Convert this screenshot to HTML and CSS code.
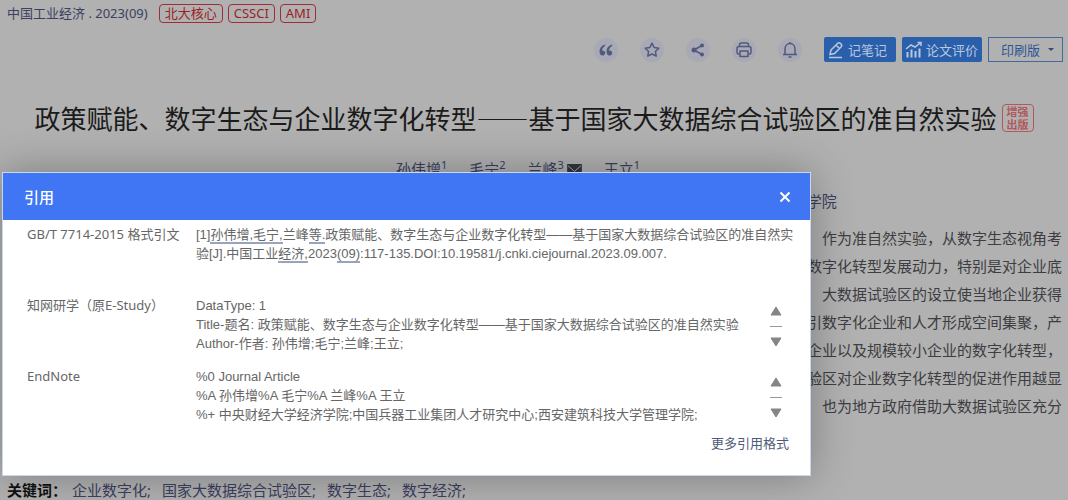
FILE: index.html
```
<!DOCTYPE html>
<html lang="zh-CN">
<head>
<meta charset="utf-8">
<title>引用</title>
<link rel="stylesheet" href="styles.css">
</head>
<body>
<div class="page">
  <div class="source">
    <a href="#" class="journal">中国工业经济 . 2023(09)</a>
    <span class="tag">北大核心</span>
    <span class="tag">CSSCI</span>
    <span class="tag">AMI</span>
  </div>

  <div class="toolbar">
    <button class="round" type="button" aria-label="引用">
      <svg viewBox="0 0 24 24"><path class="fill" d="M11 6.500C7.600 7.500 5.500 10 5.500 13.500C5.500 16 6.800 17.500 8.500 17.500C10 17.500 11.200 16.400 11.200 14.900C11.200 13.400 10.100 12.400 8.700 12.400H8C8.200 10.500 9.300 9 11.300 7.700zM18 6.500C14.600 7.500 12.500 10 12.500 13.500C12.500 16 13.800 17.500 15.500 17.500C17 17.500 18.200 16.400 18.200 14.900C18.200 13.400 17.100 12.400 15.700 12.400H15C15.200 10.500 16.300 9 18.300 7.700z"/></svg>
    </button>
    <button class="round" type="button" aria-label="收藏">
      <svg viewBox="0 0 24 24"><path d="M12 5.200L14.100 9.500L18.800 10.200L15.400 13.500L16.200 18.200L12 16L7.800 18.200L8.600 13.500L5.200 10.200L9.900 9.500z"/></svg>
    </button>
    <button class="round" type="button" aria-label="分享">
      <svg viewBox="0 0 24 24"><path d="M16 7.500L8 12L16 16.500"/><circle class="fill" cx="16" cy="7.500" r="2"/><circle class="fill" cx="8" cy="12" r="2.500"/><circle class="fill" cx="16" cy="16.500" r="2"/></svg>
    </button>
    <button class="round" type="button" aria-label="打印">
      <svg viewBox="0 0 24 24"><path d="M7.500 8.500V7Q7.500 5 9.500 5H14.500Q16.500 5 16.500 7V8.500M8 16H6.500Q5 16 5 14.500V10.500Q5 8.500 7 8.500H17Q19 8.500 19 10.500V14.500Q19 16 17.500 16H16M8 13H16V18.500H8z"/></svg>
    </button>
    <button class="round" type="button" aria-label="提醒">
      <svg viewBox="0 0 24 24"><path d="M12 4V5.500M7 16V11C7 8 9 5.500 12 5.500S17 8 17 11V16M5 16.500H19M10.500 19H13.500"/></svg>
    </button>
    <div class="actions">
      <button class="btn" type="button">
        <svg viewBox="0 0 18 18"><path d="M4 9L10.500 2.500Q12 1 13.500 2.500L14 3Q15.500 4.500 14 6L7.500 12.500L3 13.500zM9 4L12.500 7.500M2 16.500H15"/></svg>记笔记
      </button>
      <button class="btn" type="button">
        <svg viewBox="0 0 18 18"><path d="M1 8L6 4L10 6L16 1.500M12.500 1.500H16V5"/><path class="bars" d="M2.500 16.500V11M6.500 16.500V8.500M10.500 16.500V10M14.500 16.500V7.500"/></svg>论文评价
      </button>
      <label class="print">
        <select aria-label="版本">
          <option>印刷版</option>
        </select>
      </label>
    </div>
  </div>

  <h1 class="title">政策赋能、数字生态与企业数字化转型——基于国家大数据综合试验区的准自然实验<span class="stamp">增强<br>出版</span></h1>

  <div class="authors">
    <a href="#">孙伟增<sup>1</sup></a>
    <a href="#">毛宁<sup>2</sup></a>
    <a href="#">兰峰<sup>3</sup><svg viewBox="0 0 16 12"><path d="M0 0H16V12H0z"/><path class="flap" d="M1 2L8 8L15 2"/></svg></a>
    <a href="#">王立<sup>1</sup></a>
  </div>
  <div class="units">
    <span>1. 中央财经大学经济学院</span>
    <span>2. 中国兵器工业集团人才研究中心</span>
    <span>3. 西安建筑科技大学管理学院</span>
  </div>

  <p class="abstract">作为准自然实验，从数字生态视角考<br>
  数字化转型发展动力，特别是对企业底<br>
  大数据试验区的设立使当地企业获得<br>
  引数字化企业和人才形成空间集聚，产<br>
  企业以及规模较小企业的数字化转型，<br>
  试验区对企业数字化转型的促进作用越显<br>
  也为地方政府借助大数据试验区充分</p>

  <div class="keywords">
    <b>关键词：</b>
    <a href="#">企业数字化;</a>
    <a href="#">国家大数据综合试验区;</a>
    <a href="#">数字生态;</a>
    <a href="#">数字经济;</a>
  </div>
</div>

<div class="dialog" role="dialog" aria-labelledby="dialog-title">
  <div class="dialog-head">
    <h2 id="dialog-title">引用</h2>
    <button class="close" type="button" aria-label="关闭">
      <svg viewBox="0 0 12 12"><path d="M1.500 1.500L10.500 10.500M10.500 1.500L1.500 10.500"/></svg>
    </button>
  </div>
  <table class="cites">
    <tr>
      <th scope="row">GB/T 7714-2015 格式引文</th>
      <td colspan="2">[1]<u>孙伟增,毛宁,</u>兰峰<u>等.</u>政策赋能、数字生态与企业数字化转型——基于国家大数据综合试验区的准自然实<br>验[J].中国工业<u>经济,</u>2023<u>(09)</u>:117-135.DOI:10.19581/j.cnki.ciejournal.2023.09.007.</td>
    </tr>
    <tr>
      <th scope="row">知网研学（原E-Study）</th>
      <td>DataType: 1<br>Title-题名: 政策赋能、数字生态与企业数字化转型——基于国家大数据综合试验区的准自然实验<br>Author-作者: 孙伟增;毛宁;兰峰;王立;</td>
      <td class="scroll">
        <div class="stepper">
          <button type="button" aria-label="向上"><svg viewBox="0 0 12 10"><path d="M6 1L11 9H1z"/></svg></button>
          <span></span>
          <button type="button" aria-label="向下"><svg viewBox="0 0 12 10"><path d="M6 9L1 1H11z"/></svg></button>
        </div>
      </td>
    </tr>
    <tr>
      <th scope="row">EndNote</th>
      <td>%0 Journal Article<br>%A 孙伟增%A 毛宁%A 兰峰%A 王立<br>%+ 中央财经大学经济学院;中国兵器工业集团人才研究中心;西安建筑科技大学管理学院;</td>
      <td class="scroll">
        <div class="stepper">
          <button type="button" aria-label="向上"><svg viewBox="0 0 12 10"><path d="M6 1L11 9H1z"/></svg></button>
          <span></span>
          <button type="button" aria-label="向下"><svg viewBox="0 0 12 10"><path d="M6 9L1 1H11z"/></svg></button>
        </div>
      </td>
    </tr>
  </table>
  <div class="more"><a href="#">更多引用格式</a></div>
</div>
</body>
</html>
```

FILE: styles.css
```
* {
  box-sizing: border-box;
}
body {
  margin: 0;
  overflow: hidden;
  background: #b1b1b1;
  color: #3d3d42;
  font: 15px/20px "Noto Sans", "Noto Sans CJK SC", sans-serif;
}
a {
  color: #3a4060;
  text-decoration: none;
}
button, select {
  margin: 0;
  padding: 0;
  border: 0;
  background: none;
  font: inherit;
  color: inherit;
}
svg {
  display: block;
  fill: none;
}

/* article */
.source {
  display: flex;
  align-items: center;
  gap: 5px;
  height: 26px;
  padding-left: 7px;
  font-size: 13px;
}
.journal {
  margin-right: 6px;
}
.tag {
  height: 19px;
  padding: 0 5px;
  border: 1px solid #9c2f35;
  border-radius: 4px;
  color: #9c1f26;
  line-height: 17px;
}
.toolbar {
  display: flex;
  justify-content: flex-end;
  align-items: center;
  gap: 22px;
  margin-top: 11px;
  padding-right: 5px;
}
.round {
  width: 24px;
  height: 24px;
  border-radius: 50%;
  background: #a8a9b4;
}
.round svg {
  width: 24px;
  height: 24px;
  stroke: #505a7c;
  stroke-width: 1.500;
  stroke-linejoin: round;
}
.round .fill {
  fill: #505a7c;
  stroke: none;
}
.actions {
  display: flex;
  gap: 6px;
  font-size: 13px;
}
.btn {
  display: flex;
  align-items: center;
  gap: 3px;
  min-width: 72px;
  height: 25px;
  padding: 0 4px 0 3px;
  border-radius: 2px;
  background: #2a5fab;
  color: #b9c7df;
}
.btn svg {
  width: 18px;
  height: 18px;
  stroke: #b9c7df;
  stroke-width: 1.500;
}
.btn .bars {
  stroke-width: 2;
}
.print {
  display: flex;
  align-items: center;
  width: 75px;
  height: 25px;
  padding: 0 8px 0 12px;
  border: 1px solid #4668a0;
  color: #2f5694;
}
.print select {
  flex: 1;
  appearance: none;
}
.print::after {
  content: "";
  border: 3px solid transparent;
  border-top-color: #2f4a7c;
  border-bottom: 0;
}
.title {
  display: flex;
  justify-content: center;
  align-items: center;
  gap: 5px;
  margin: 38px 0 0;
  color: #1b1b1b;
  font-family: "Noto Sans CJK SC", sans-serif;
  font-size: 26px;
  font-weight: 400;
  line-height: 36px;
  white-space: nowrap;
}
.stamp {
  padding: 0 4px;
  border: 1px solid #b0585c;
  border-radius: 4px;
  color: #b0585c;
  font-size: 11px;
  font-weight: 700;
  line-height: 13px;
}
.authors {
  display: flex;
  justify-content: center;
  gap: 22px;
  margin-top: 23px;
  padding-right: 32px;
}
.authors a {
  display: flex;
}
.authors sup {
  font-size: 11px;
  line-height: 12px;
}
.authors svg {
  align-self: center;
  width: 15px;
  height: 11px;
  margin-left: 3px;
  fill: #33363c;
}
.authors .flap {
  fill: none;
  stroke: #b1b1b1;
  stroke-width: 1;
}
.units {
  display: flex;
  justify-content: center;
  gap: 8px;
  margin-top: 12px;
  color: #3a4060;
}
.abstract {
  margin: 13px 0 0;
  padding-right: 6px;
  line-height: 28px;
  text-align: right;
}
.keywords {
  display: flex;
  gap: 11px;
  margin-top: 60px;
  padding-left: 7px;
}
.keywords b {
  margin-right: -6px;
  color: #111;
}

/* citation dialog */
.dialog {
  position: absolute;
  top: 172px;
  left: 2px;
  width: 76%;
  max-width: 809px;
  padding-bottom: 22px;
  border: 1px solid #c9d8f0;
  background: #fff;
  box-shadow: 0 0 40px rgba(0, 0, 0, .3);
  color: #666;
  font-size: 13px;
}
.dialog-head {
  display: flex;
  justify-content: space-between;
  align-items: center;
  height: 47px;
  padding: 0 19px 0 21px;
  background: #4076f4;
  color: #fff;
}
.dialog-head h2 {
  margin: 0;
  font-size: 15px;
  font-weight: 500;
}
.close svg {
  width: 12px;
  height: 12px;
  stroke: #fff;
  stroke-width: 2;
}
.cites {
  width: 100%;
  margin-top: 5px;
  border-spacing: 0;
  line-height: 19px;
}
.cites th, .cites td {
  height: 71px;
  padding: 0;
  vertical-align: top;
  text-align: left;
  white-space: nowrap;
}
.cites th {
  width: 193px;
  padding-left: 24px;
  font-weight: 400;
}
.cites td {
  font-family: "Liberation Sans", "Noto Sans CJK SC", sans-serif;
}
.cites u {
  border-bottom: 2px solid #98a4bd;
  text-decoration: none;
}
.cites tr:last-child th, .cites tr:last-child td {
  height: 66px;
}
.cites .scroll {
  width: 40px;
}
.stepper {
  display: flex;
  flex-direction: column;
  gap: 10px;
  width: 12px;
  padding-top: 10px;
}
.stepper svg {
  width: 12px;
  height: 10px;
  fill: #858585;
  stroke: #858585;
  stroke-width: 1;
  stroke-linejoin: round;
}
.stepper span {
  height: 1px;
  background: #999;
}
.more {
  padding-right: 21px;
  text-align: right;
}
.more a {
  color: #4f5b78;
}
```
